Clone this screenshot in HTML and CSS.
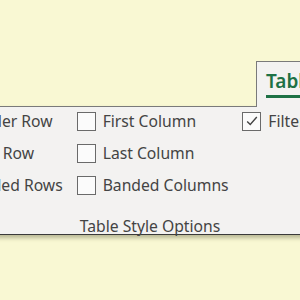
FILE: index.html
```html
<!DOCTYPE html>
<html lang="en">
<head>
    <meta charset="UTF-8">
    <title>Table Style Options</title>
    <link rel="stylesheet" href="styles.css">
</head>
<body>
    <div class="tab-row">
        <div class="tab"><span class="tab-label">Table Design</span></div>
    </div>
    <div class="panel">
        <div class="options">
            <div class="col col-1">
                <label class="opt"><span class="box"></span>Header Row</label>
                <label class="opt"><span class="box"></span>Total Row</label>
                <label class="opt"><span class="box"></span>Banded Rows</label>
            </div>
            <div class="col col-2">
                <label class="opt"><span class="box"></span>First Column</label>
                <label class="opt"><span class="box"></span>Last Column</label>
                <label class="opt"><span class="box"></span>Banded Columns</label>
            </div>
            <div class="col col-3">
                <label class="opt">
                    <span class="box">
                        <svg viewBox="0 0 16 16" width="14" height="14"><path d="M2.5 8.5 L6 12 L13.5 3.5" fill="none" stroke="#444" stroke-width="1.6"/></svg>
                    </span>Filter Button</label>
            </div>
        </div>
        <div class="group-name">Table Style Options</div>
    </div>
</body>
</html>
```

FILE: styles.css
```css
body {
    margin: 0;
    height: 300px;
    overflow: hidden;
    background-color: #f9f8d3;
    font-family: "Noto Sans", "Open Sans", sans-serif;
    color: #444;
}
.tab-row {
    padding-top: 61px;
    display: flex;
    justify-content: flex-end;
}
.tab {
    position: relative;
    z-index: 1;
    width: 44px;
    height: 46px;
    margin-bottom: -1px;
    background-color: #f3f2f1;
    border-left: 1px solid #7a7a7a;
    border-top: 1px solid #7a7a7a;
    box-sizing: border-box;
    padding-left: 9px;
    overflow: hidden;
    white-space: nowrap;
}
.tab-label {
    display: inline-block;
    margin-top: 8px;
    font-size: 19px;
    font-weight: 600;
    color: #1e7145;
    padding-bottom: 3px;
    border-bottom: 3px solid #1e7145;
    line-height: 22px;
}
.panel {
    margin-left: -60px;
    width: 420px;
    background-color: #f3f2f1;
    border-top: 1px solid #7a7a7a;
    border-bottom: 1px solid #3a3a3a;
    box-shadow: 0 3px 4px rgba(70, 70, 40, 0.35);
    height: 129px;
    box-sizing: border-box;
}
.options {
    display: flex;
}
.col {
    display: flex;
    flex-direction: column;
    gap: 4px;
}
.col-1 {
    margin-left: -3px;
    width: 140px;
}
.col-2 {
    width: 166px;
}
.opt {
    display: flex;
    align-items: center;
    gap: 7px;
    height: 28px;
    font-size: 15.7px;
    white-space: nowrap;
}
.box {
    width: 19px;
    height: 19px;
    box-sizing: border-box;
    border: 1.5px solid #6a6a6a;
    background-color: #fbfbfb;
    display: flex;
    align-items: center;
    justify-content: center;
}
.group-name {
    margin-top: 16px;
    padding-left: 60px;
    width: 300px;
    text-align: center;
    font-size: 15.7px;
}
```
